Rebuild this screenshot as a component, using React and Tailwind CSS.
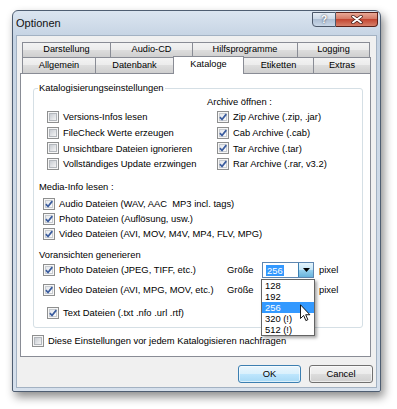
import React from "react";

const Check = ({ checked }) => (
  <span className="relative flex w-[12px] h-[12px] shrink-0 border border-[#8e8f8f] bg-[#f6f6f6] p-[1px]">
    <span
      className={`flex-1 border ${
        checked
          ? "border-[#c7cbd0] bg-gradient-to-br from-[#e4e7eb] to-[#fbfbfb]"
          : "border-[#b3b7bc] bg-gradient-to-br from-[#c8ccd2] to-[#f4f4f4]"
      }`}
    />
    {checked && (
      <svg viewBox="0 0 12 12" className="absolute left-[-1px] top-[-1px] w-[12px] h-[12px]">
        <path d="M2.9 6.1 L5 8.5 L9.3 3.1" fill="none" stroke="#3a5c9e" strokeWidth="1.7" strokeLinejoin="round" />
      </svg>
    )}
  </span>
);

const Row = ({ checked, className = "", children }) => (
  <div className={`flex items-center ${className}`}>
    <Check checked={checked} />
    <span className="ml-[4px] whitespace-nowrap">{children}</span>
  </div>
);

const tabBg =
  "bg-[linear-gradient(to_bottom,#f3f3f3_0%,#ebebeb_50%,#dddddd_50%,#cfcfcf_100%)]";

const Tab = ({ className = "", children }) => (
  <div
    className={`flex items-center justify-center h-full border-t border-l border-[#898c95] ${tabBg} ${className}`}
  >
    {children}
  </div>
);

const Combo = ({ open }) => (
  <div className="relative flex w-[52px] h-[16px] border border-[#5e86b0] bg-white">
    <div className="flex flex-1 items-center pl-[3px]">
      {open && <span className="bg-[#3399ff] text-white px-[1px] leading-[11px]">256</span>}
    </div>
    <div className="flex w-[15px] items-center justify-center border-l border-[#3c7fb1] bg-[linear-gradient(to_bottom,#e5f4fc_0%,#c4e5f6_50%,#98d1ef_50%,#68b3db_100%)]">
      <svg viewBox="0 0 7 4" className="w-[7px] h-[4px]">
        <path d="M0 0 L7 0 L3.5 4 Z" fill="#000" />
      </svg>
    </div>
    {open && (
      <div className="absolute left-[-2px] top-[16px] z-20 w-[54px] border border-[#646464] bg-white shadow-[2px_2px_3px_rgba(0,0,0,0.35)]">
        <div className="flex h-[11px] items-center pl-[3px]">128</div>
        <div className="flex h-[11px] items-center pl-[3px]">192</div>
        <div className="flex h-[11px] items-center pl-[3px] bg-[#3399ff] text-white">256</div>
        <div className="flex h-[11px] items-center pl-[3px]">320 (!)</div>
        <div className="flex h-[11px] items-center pl-[3px]">512 (!)</div>
        <svg viewBox="0 0 12 19" className="absolute left-[38px] top-[24px] w-[11px] h-[18px]">
          <path d="M0.5 0.5 L0.5 15.5 L4 12.2 L6.4 17.8 L8.6 16.8 L6.2 11.4 L10.8 11.4 Z" fill="#fff" stroke="#000" strokeWidth="1" strokeLinejoin="round" />
        </svg>
      </div>
    )}
  </div>
);

export default function App() {
  return (
    <div className="w-[397px] h-[409px] overflow-hidden bg-white pl-[12px] pt-[10px] font-['Liberation_Sans',Arial,sans-serif] text-[9.4px] leading-none text-black">
      <div className="flex flex-col w-[369px] h-[382px] rounded-t-[6px] rounded-b-[2px] border border-[#4f5e72] bg-[linear-gradient(to_bottom,#dbe5f0_0%,#c5d3e3_7%,#cdd9e7_40%,#d6e0ec_100%)] shadow-[3px_5px_10px_rgba(0,0,0,0.45)]">
        {/* title bar */}
        <div className="flex h-[24px] shrink-0 items-start justify-between">
          <span className="ml-[3px] mt-[7px] text-[11px] text-[#111]">Optionen</span>
          <div className="mr-[2px] mt-[1px] flex">
            <div className="flex w-[24px] h-[15px] items-center justify-center rounded-bl-[4px] border border-[#4c586a] bg-[linear-gradient(to_bottom,#e6edf5_0%,#cbd8e7_45%,#aebfd4_50%,#c9d7e7_100%)] text-[10px] font-bold text-white [text-shadow:0_0_2px_#223]">
              ?
            </div>
            <div className="flex w-[42px] h-[15px] items-center justify-center rounded-br-[4px] border border-l-0 border-[#5a2018] bg-[linear-gradient(to_bottom,#e9a896_0%,#d57a66_45%,#c34732_50%,#d6806a_100%)]">
              <svg viewBox="0 0 12 9" className="w-[12px] h-[9px]">
                <path d="M2 1.5 L10 7.5 M10 1.5 L2 7.5" stroke="#3a1410" strokeWidth="3.4" strokeLinecap="round" />
                <path d="M2 1.5 L10 7.5 M10 1.5 L2 7.5" stroke="#fff" strokeWidth="2" strokeLinecap="round" />
              </svg>
            </div>
          </div>
        </div>

        {/* client */}
        <div className="mx-[3px] mb-[3px] flex flex-1 flex-col border border-[#a3b2c3] bg-[#f0f0f0] pt-[6px]">
          {/* tabs */}
          <div className="ml-[3px] flex flex-col text-[9.2px]">
            <div className="ml-[2px] flex h-[15px]">
              <Tab className="w-[88px]">Darstellung</Tab>
              <Tab className="w-[82px]">Audio-CD</Tab>
              <Tab className="w-[105px]">Hilfsprogramme</Tab>
              <Tab className="w-[73px] border-r">Logging</Tab>
            </div>
            <div className="ml-[2px] flex h-[16px] items-end">
              <Tab className="w-[73px]">Allgemein</Tab>
              <Tab className="w-[78px]">Datenbank</Tab>
              <div className="relative z-10 mb-[-1px] flex h-[18px] w-[71px] items-center justify-center self-end border-l border-r border-t border-[#898c95] bg-white pb-[1px]">
                Kataloge
              </div>
              <Tab className="w-[69px] border-l-0">Etiketten</Tab>
              <Tab className="w-[58px] border-r">Extras</Tab>
            </div>

            {/* panel */}
            <div className="flex h-[284px] w-[351px] flex-col border border-[#898c95] bg-white text-[9.4px]">
              <div className="relative ml-[12px] mt-[14px] h-[240px] w-[330px] rounded-[3px] border border-[#d5dfe5]">
                <span className="absolute left-[4px] top-[-6px] bg-white px-[1px]">Katalogisierungseinstellungen</span>

                <div className="flex h-[84px]">
                  <div className="ml-[13px] w-[160px] pt-[20px]">
                    <Row className="h-[15.7px]">Versions-Infos lesen</Row>
                    <Row className="h-[15.7px]">FileCheck Werte erzeugen</Row>
                    <Row className="h-[15.7px]">Unsichtbare Dateien ignorieren</Row>
                    <Row className="h-[15.7px]">Vollständiges Update erzwingen</Row>
                  </div>
                  <div className="pt-[5px]">
                    <div className="flex h-[15px] items-center">Archive öffnen :</div>
                    <div className="pl-[10px]">
                      <Row checked className="h-[15.7px]">Zip Archive (.zip, .jar)</Row>
                      <Row checked className="h-[15.7px]">Cab Archive (.cab)</Row>
                      <Row checked className="h-[15.7px]">Tar Archive (.tar)</Row>
                      <Row checked className="h-[15.7px]">Rar Archive (.rar, v3.2)</Row>
                    </div>
                  </div>
                </div>

                <div className="ml-[5px] mt-[6px] flex h-[16px] items-center">Media-Info lesen :</div>
                <div className="ml-[9px] mt-[1px]">
                  <Row checked className="h-[15px]">Audio Dateien (WAV, AAC&nbsp; MP3 incl. tags)</Row>
                  <Row checked className="h-[15px]">Photo Dateien (Auflösung, usw.)</Row>
                  <Row checked className="h-[15px]">Video Dateien (AVI, MOV, M4V, MP4, FLV, MPG)</Row>
                </div>

                <div className="ml-[5px] mt-[7px] flex h-[14px] items-center">Voransichten generieren</div>
                <div className="flex h-[16px] items-center">
                  <div className="w-[193px] pl-[9px]">
                    <Row checked>Photo Dateien (JPEG, TIFF, etc.)</Row>
                  </div>
                  <span className="w-[35px]">Größe</span>
                  <Combo open />
                  <span className="ml-[5px]">pixel</span>
                </div>
                <div className="relative mt-[4px] flex h-[16px] items-center">
                  <div className="w-[193px] pl-[9px]">
                    <Row checked>Video Dateien (AVI, MPG, MOV, etc.)</Row>
                  </div>
                  <span className="w-[35px]">Größe</span>
                  <Combo />
                  <span className="ml-[5px]">pixel</span>
                </div>
                <Row checked className="ml-[13px] mt-[7px] h-[16px]">Text Dateien (.txt .nfo .url .rtf)</Row>
              </div>

              <Row className="ml-[11px] mt-[5px] h-[16px]">Diese Einstellungen vor jedem Katalogisieren nachfragen</Row>
            </div>
          </div>

          {/* buttons */}
          <div className="mt-[8px] flex justify-end gap-[8px] pr-[3px]">
            <div className="flex h-[18px] w-[63px] items-center justify-center rounded-[3px] border border-[#3c7fb1] bg-[linear-gradient(to_bottom,#eaf6fd_0%,#d9f0fc_50%,#bee6fd_50%,#a7d9f5_100%)] shadow-[inset_0_0_0_1px_rgba(255,255,255,0.6)]">
              OK
            </div>
            <div className="flex h-[18px] w-[64px] items-center justify-center rounded-[3px] border border-[#707070] bg-[linear-gradient(to_bottom,#f2f2f2_0%,#ebebeb_50%,#dddddd_50%,#cfcfcf_100%)] shadow-[inset_0_0_0_1px_rgba(255,255,255,0.6)]">
              Cancel
            </div>
          </div>
        </div>
      </div>
    </div>
  );
}
